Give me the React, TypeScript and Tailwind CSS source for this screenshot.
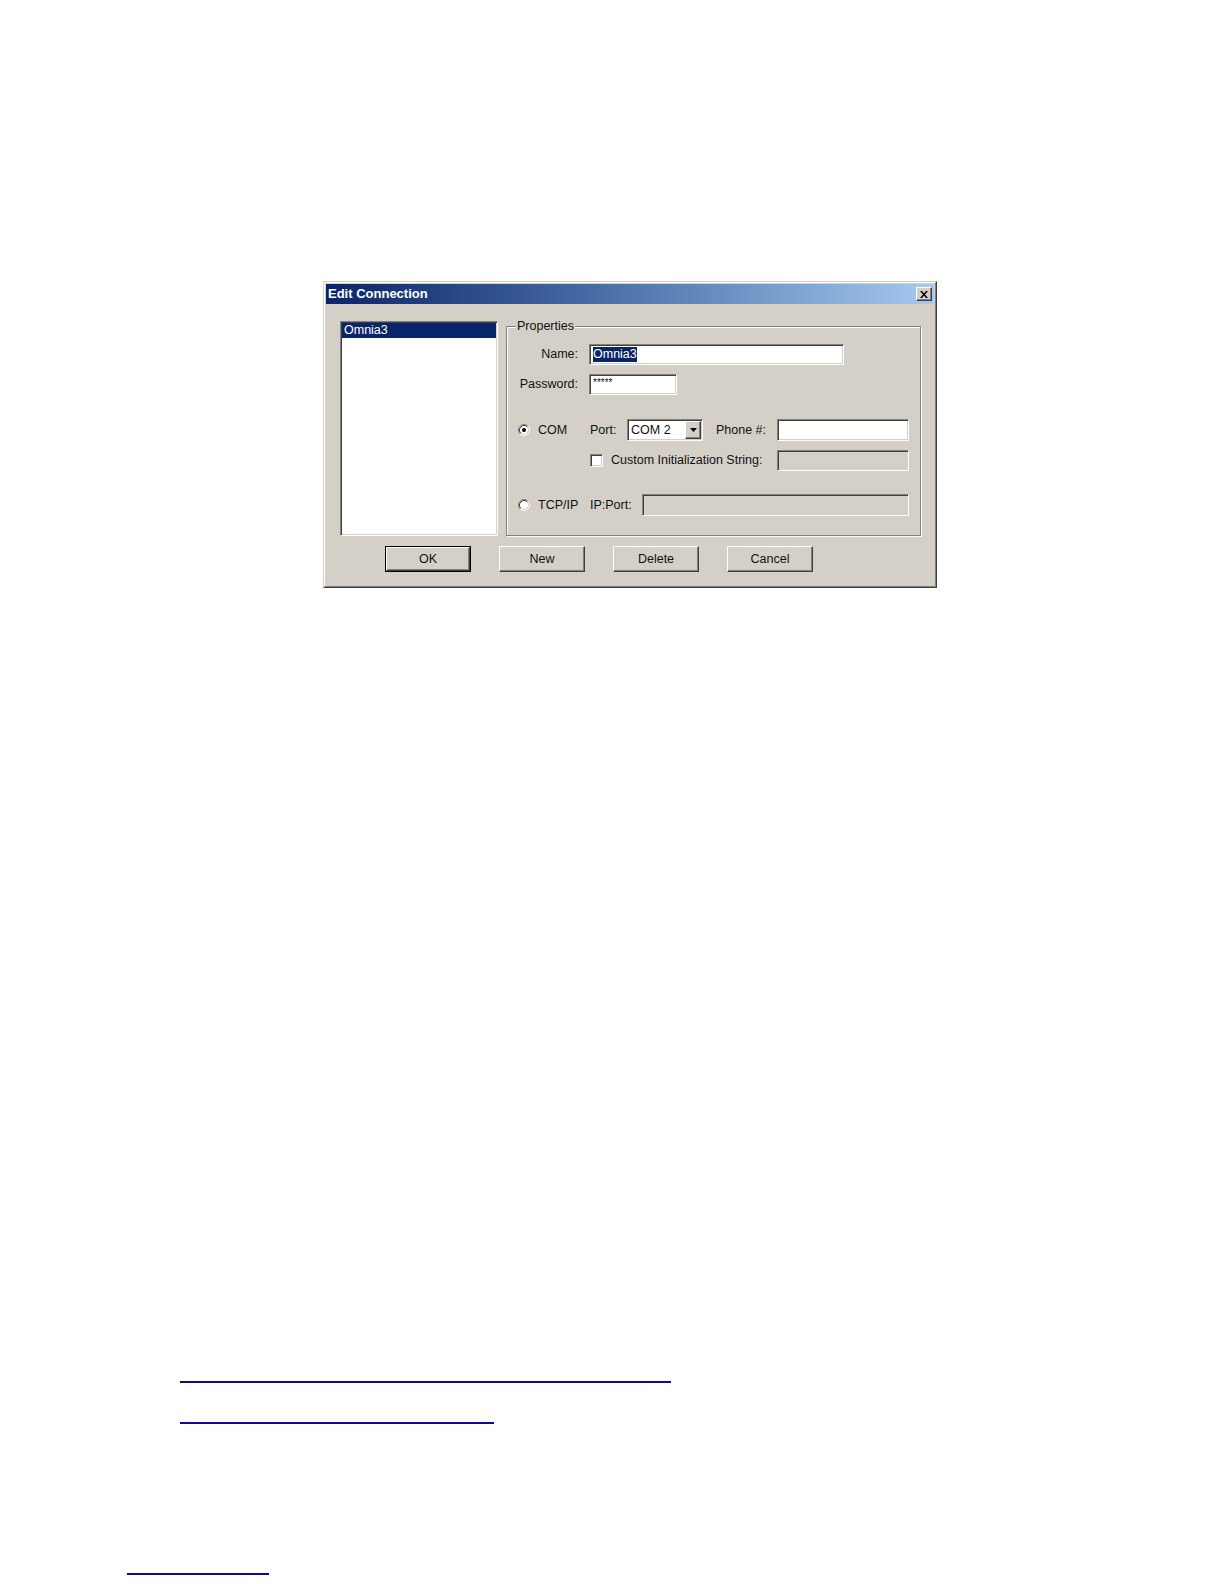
import React from "react";

// Win2000-style bevels
const sunken =
  "border border-t-[#808080] border-l-[#808080] border-r-white border-b-white shadow-[inset_1px_1px_0_#404040,inset_-1px_-1px_0_#d4d0c8]";
const raised =
  "border border-t-white border-l-white border-r-[#404040] border-b-[#404040] shadow-[inset_-1px_-1px_0_#808080]";

function Radio({ checked }: { checked?: boolean }) {
  return (
    <svg width="12" height="12" viewBox="0 0 12 12" className="shrink-0">
      <circle cx="6" cy="6" r="4.5" fill="#fff" />
      <path d="M2.11 9.89A5.5 5.5 0 0 1 9.89 2.11" fill="none" stroke="#808080" />
      <path d="M9.89 2.11A5.5 5.5 0 0 1 2.11 9.89" fill="none" stroke="#fff" />
      <path d="M2.82 9.18A4.5 4.5 0 0 1 9.18 2.82" fill="none" stroke="#404040" />
      <path d="M9.18 2.82A4.5 4.5 0 0 1 2.82 9.18" fill="none" stroke="#d4d0c8" />
      {checked && <circle cx="6" cy="6" r="2" fill="#000" />}
    </svg>
  );
}

function Button({ label, isDefault }: { label: string; isDefault?: boolean }) {
  if (isDefault) {
    return (
      <div className="h-[26px] w-[86px] border border-black">
        <div className={`flex h-full w-full items-center justify-center bg-[#d4d0c8] ${raised}`}>
          {label}
        </div>
      </div>
    );
  }
  return (
    <div className={`flex h-[26px] w-[86px] items-center justify-center bg-[#d4d0c8] ${raised}`}>
      {label}
    </div>
  );
}

function Dialog() {
  return (
    <div className="ml-[323px] w-[614px] border border-t-[#d4d0c8] border-l-[#d4d0c8] border-r-[#404040] border-b-[#404040] bg-[#d4d0c8]">
      <div className="border border-t-white border-l-white border-r-[#808080] border-b-[#808080] p-px">
        {/* TITLE BAR */}
        <div className="flex h-[20px] items-center justify-between bg-linear-to-r from-[#0a246a] to-[#a6caf0] pl-[2px] pr-[2px]">
          <span className="text-[13px] font-bold text-white">Edit Connection</span>
          <span className={`flex h-[14px] w-[16px] items-center justify-center bg-[#d4d0c8] ${raised}`}>
            <svg width="8" height="7" viewBox="0 0 8 7">
              <path d="M0 0h2l2 2.5L6 0h2L5 3.5 8 7H6L4 4.5 2 7H0l3-3.5z" fill="#000" />
            </svg>
          </span>
        </div>

        {/* BODY */}
        <div className="pl-[14px] pt-[17px] pb-[13px] text-[12.5px] text-[#111]">
          <div className="flex items-start gap-[8px]">
            {/* LIST */}
            <div className={`h-[215px] w-[158px] bg-white p-px ${sunken}`}>
              <div className="h-[15px] bg-[#0a246a] pl-[2px] leading-[15px] text-white">Omnia3</div>
            </div>

            {/* PROPERTIES GROUP */}
            <div className="relative mt-[5px] h-[210px] w-[415px] border border-[#808080] shadow-[inset_1px_1px_0_#fff,1px_1px_0_#fff]">
              <span className="absolute -top-[9px] left-[9px] bg-[#d4d0c8] px-px leading-[16px]">Properties</span>

              <div className="flex flex-col pl-[11px] pr-[11px]">
                {/* Name */}
                <div className="mt-[17px] flex h-[21px] items-center">
                  <span className="w-[60px] text-right">Name:</span>
                  <div className={`ml-[11px] flex h-full w-[255px] items-center bg-white pl-[3px] ${sunken}`}>
                    <span className="bg-[#0a246a] leading-[15px] text-white">Omnia3</span>
                  </div>
                </div>

                {/* Password */}
                <div className="mt-[9px] flex h-[21px] items-center">
                  <span className="w-[60px] text-right">Password:</span>
                  <div className={`ml-[11px] h-full w-[88px] bg-white pl-[3px] pt-[2px] text-[10px] leading-[12px] ${sunken}`}>
                    *****
                  </div>
                </div>

                {/* COM */}
                <div className="mt-[24px] flex h-[22px] items-center">
                  <div className="flex w-[72px] items-center gap-[8px]">
                    <Radio checked />
                    <span>COM</span>
                  </div>
                  <span className="w-[37px]">Port:</span>
                  <div className={`flex h-full w-[76px] items-center bg-white p-px ${sunken}`}>
                    <span className="flex-1 pl-[2px]">COM 2</span>
                    <span className={`flex h-[18px] w-[16px] items-center justify-center bg-[#d4d0c8] ${raised}`}>
                      <svg width="7" height="4" viewBox="0 0 7 4">
                        <path d="M0 0h7L3.5 4z" fill="#000" />
                      </svg>
                    </span>
                  </div>
                  <span className="ml-[13px]">Phone #:</span>
                  <div className={`ml-auto h-[22px] w-[132px] bg-white ${sunken}`} />
                </div>

                {/* Custom init */}
                <div className="mt-[9px] flex h-[21px] items-center">
                  <span className={`ml-[72px] block h-[13px] w-[13px] shrink-0 bg-white ${sunken}`} />
                  <span className="ml-[8px]">Custom Initialization String:</span>
                  <div className={`ml-auto h-[21px] w-[132px] bg-[#d4d0c8] ${sunken}`} />
                </div>

                {/* TCP/IP */}
                <div className="mt-[23px] flex h-[22px] items-center">
                  <div className="flex w-[72px] items-center gap-[8px]">
                    <Radio />
                    <span>TCP/IP</span>
                  </div>
                  <span className="w-[52px]">IP:Port:</span>
                  <div className={`h-full flex-1 bg-[#d4d0c8] ${sunken}`} />
                </div>
              </div>
            </div>
          </div>

          {/* BUTTONS */}
          <div className="mt-[10px] flex gap-[28px] pl-[45px]">
            <Button label="OK" isDefault />
            <Button label="New" />
            <Button label="Delete" />
            <Button label="Cancel" />
          </div>
        </div>
      </div>
    </div>
  );
}

export default function App() {
  return (
    <div className="min-h-[1584px] bg-white pt-[281px] font-['Liberation_Sans',Arial,sans-serif]">
      <Dialog />

      {/* links (underlines only) */}
      <div className="ml-[180px] mt-[793px] h-[2px] w-[491px] bg-[#0b0b9b]" />
      <div className="ml-[180px] mt-[39px] h-[2px] w-[314px] bg-[#0b0b9b]" />
      <div className="ml-[127px] mt-[149px] h-[2px] w-[142px] bg-[#0b0b9b]" />
    </div>
  );
}
